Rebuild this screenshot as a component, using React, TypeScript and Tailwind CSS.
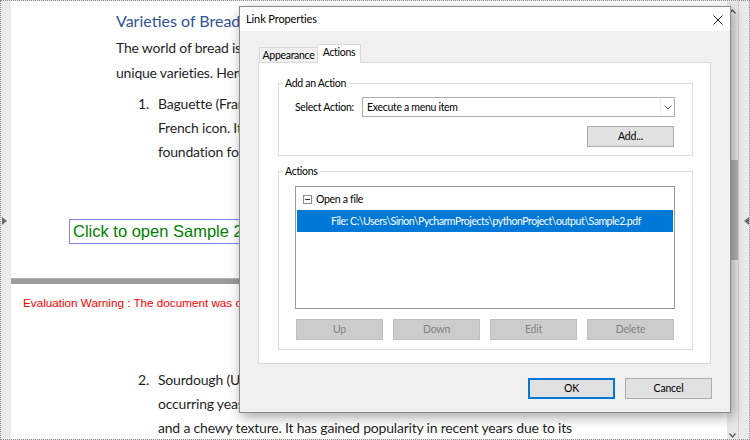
import clsx from 'clsx';

const docFont = "font-['Lato','Noto_Sans',sans-serif]";
const uiFont = "font-['Lato','Noto_Sans',sans-serif]";

function WinButton({
  label,
  disabled,
  primary,
}: {
  label: string;
  disabled?: boolean;
  primary?: boolean;
}) {
  return (
    <button
      type="button"
      className={clsx(
        'flex h-[21px] w-[87px] items-center justify-center text-[10.5px] leading-none tracking-[-0.2px]',
        disabled && 'border border-[#bfbfbf] bg-[#cccccc] text-[#838383]',
        !disabled && !primary && 'border border-[#adadad] bg-[#e1e1e1] text-black',
        primary && 'border-2 border-[#0078d7] bg-[#e1e1e1] text-black'
      )}
    >
      {label}
    </button>
  );
}

function GroupBox({ title, children }: { title: string; children: React.ReactNode }) {
  return (
    <fieldset className="m-0 min-w-0 border border-[#dcdcdc] p-0">
      <legend className="ml-[4px] px-[2px] leading-[16px]">{title}</legend>
      <div className="pl-[16px] pr-[17px] pt-[6px]">{children}</div>
    </fieldset>
  );
}

function LinkDialog() {
  return (
    <div
      className={clsx(
        'absolute left-[238px] top-[5px] flex h-[407px] w-[492px] flex-col border border-[#8c8c8c] bg-[#f0f0f0] text-[10.5px] tracking-[-0.3px] text-black shadow-[2px_4px_12px_rgba(0,0,0,0.35)]',
        uiFont
      )}
    >
      {/* title bar */}
      <div className="flex h-[24px] items-center justify-between bg-white pl-[6px] pr-[7px]">
        <span className="whitespace-nowrap text-[11px] leading-[14px] tracking-[-0.1px]">Link Properties</span>
        <svg width="10" height="10" viewBox="0 0 10 10" className="mt-[1px]">
          <path d="M0.5 0.5 L9.5 9.5 M9.5 0.5 L0.5 9.5" stroke="#1a1a1a" strokeWidth="1" />
        </svg>
      </div>

      <div className="flex flex-1 flex-col pl-[18px] pt-[13px]">
        {/* tabs */}
        <div className="flex h-[18px] items-end pl-[1px]">
          <div className="flex h-[15px] w-[58px] justify-center whitespace-nowrap border border-b-0 border-r-0 border-[#d9d9d9] bg-[#f0f0f0] leading-[14px]">
            Appearance
          </div>
          <div className="relative z-10 -mb-px flex h-[19px] w-[44px] justify-center whitespace-nowrap border border-b-0 border-[#d9d9d9] bg-white leading-[15px]">
            Actions
          </div>
        </div>

        <div className="flex h-[302px] w-[453px] flex-col border border-[#d9d9d9] bg-white pl-[19px] pt-[12px]">
          <div className="w-[415px]">
            <GroupBox title="Add an Action">
              <div className="flex h-[20px] items-center">
                <span className="w-[67px] whitespace-nowrap leading-[14px]">Select Action:</span>
                <div className="flex h-[20px] w-[313px] items-center border border-[#adadad] bg-white">
                  <span className="flex-1 whitespace-nowrap pl-[4px] leading-[14px]">Execute a menu item</span>
                  <div className="flex h-full w-[14px] items-center justify-center border-l border-[#ececec]">
                    <svg width="8" height="5" viewBox="0 0 8 5">
                      <path d="M0.5 0.5 L4 4 L7.5 0.5" fill="none" stroke="#606060" strokeWidth="1" />
                    </svg>
                  </div>
                </div>
              </div>
              <div className="mr-[1px] mt-[9px] flex justify-end pb-[8px]">
                <WinButton label="Add..." />
              </div>
            </GroupBox>

            <div className="mt-[7px]">
              <GroupBox title="Actions">
                <div className="mt-[1px] h-[123px] w-[380px] overflow-hidden border border-[#9a9a9a] bg-white p-px">
                  <div className="flex h-[22px] items-center pl-[6px]">
                    <svg width="9" height="9" viewBox="0 0 9 9">
                      <rect x="0.5" y="0.5" width="8" height="8" fill="white" stroke="#8c8c8c" />
                      <path d="M2 4.5 H7" stroke="#333" strokeWidth="1" />
                    </svg>
                    <span className="ml-[4px] leading-[14px]">Open a file</span>
                  </div>
                  <div className="flex h-[22px] items-center bg-[#0078d7] pl-[34px] text-white">
                    <span className="whitespace-nowrap leading-[14px] tracking-[-0.45px]">
                      File: C:\Users\Sirion\PycharmProjects\pythonProject\output\Sample2.pdf
                    </span>
                  </div>
                </div>
                <div className="ml-[1px] mt-[10px] flex gap-[10px] pb-[9px]">
                  <WinButton label="Up" disabled />
                  <WinButton label="Down" disabled />
                  <WinButton label="Edit" disabled />
                  <WinButton label="Delete" disabled />
                </div>
              </GroupBox>
            </div>
          </div>
        </div>

        <div className="mr-[18px] mt-[14px] flex justify-end gap-[10px]">
          <WinButton label="OK" primary />
          <WinButton label="Cancel" />
        </div>
      </div>
    </div>
  );
}

function Document() {
  return (
    <div className={clsx('flex w-[716px] flex-col bg-white text-[#1f1f1f]', docFont)}>
      {/* page 1 */}
      <div className="h-[277px] shrink-0 pt-[10px]">
        <div className="pl-[105px]">
          <div className="whitespace-nowrap text-[16px] leading-[20px] text-[#2f5496]">
            Varieties of Bread Around the World
          </div>
          <div className="mt-[4px] whitespace-nowrap text-[14px] leading-[25px] tracking-[-0.2px]">
            <div>The world of bread is incredibly diverse, with every culture offering its own</div>
            <div>unique varieties. Here are some popular types of bread from around the globe:</div>
          </div>
          <div className="mt-[7px] flex whitespace-nowrap pl-[22px] text-[14px] leading-[24px] tracking-[-0.2px]">
            <span className="w-[20px]">1.</span>
            <div>
              <div>Baguette (France): The baguette is a long, thin loaf with a crisp crust and is a</div>
              <div>French icon. It is made from wheat flour, water, yeast and salt, and forms the</div>
              <div>foundation for many classic sandwiches.</div>
            </div>
          </div>
        </div>
        <div className="ml-[58px] mt-[55px] flex h-[25px] w-[320px] items-center border border-[#8080ff] pl-[3px]">
          <span className="whitespace-nowrap font-['Liberation_Sans',Arial,sans-serif] text-[16.5px] leading-none text-[#008000]">
            Click to open Sample 2
          </span>
        </div>
      </div>

      <div className="h-[6px] shrink-0 border-t border-[#b5b5b5] bg-[#9c9c9c]" />

      {/* page 2 */}
      <div className="shrink-0 pl-[12px] pt-[11px]">
        <div className="whitespace-nowrap font-['Liberation_Sans',Arial,sans-serif] text-[11.7px] leading-[16px] text-[#ff0000]">
          Evaluation Warning : The document was created with Spire.PDF for Python.
        </div>
        <div className="ml-[115px] mt-[57px] flex whitespace-nowrap text-[14px] leading-[24px] tracking-[-0.2px]">
          <span className="w-[20px]">2.</span>
          <div>
            <div>Sourdough (United States): Sourdough bread is made using naturally</div>
            <div>occurring yeast and lactobacilli, which give it a tangy flavor</div>
            <div>and a chewy texture. It has gained popularity in recent years due to its</div>
          </div>
        </div>
      </div>
    </div>
  );
}

export default function App() {
  return (
    <div className="relative flex h-[440px] w-[750px] overflow-hidden border border-dotted border-[#8a8a8a] bg-[#ebebeb]">
      {/* left gutter */}
      <div className="flex w-[10px] shrink-0 items-center pl-[1px]">
        <svg width="5" height="8" viewBox="0 0 5 8" className="mt-[2px]">
          <path d="M0 0 L5 4 L0 8 Z" fill="#6b6b6b" />
        </svg>
      </div>

      <Document />

      {/* vertical scrollbar */}
      <div className="flex w-[12px] shrink-0 flex-col items-center border-r border-[#d2d2d2] bg-[#e8e8e8]">
        <svg width="7" height="5" viewBox="0 0 7 5" className="mt-[8px]">
          <path d="M0.5 4.5 L3.5 1 L6.5 4.5" fill="none" stroke="#555" strokeWidth="1.2" />
        </svg>
        <div className="ml-[2px] mt-[146px] h-[100px] w-[9px] self-start border-l-2 border-[#999999] bg-[#b3b3b3]" />
        <div className="flex-1" />
        <svg width="7" height="5" viewBox="0 0 7 5" className="mb-[1px]">
          <path d="M0.5 0.5 L3.5 4 L6.5 0.5" fill="none" stroke="#555" strokeWidth="1.2" />
        </svg>
      </div>

      {/* right gutter */}
      <div className="flex flex-1 items-center justify-end">
        <svg width="5" height="8" viewBox="0 0 5 8" className="mt-[2px]">
          <path d="M5 0 L0 4 L5 8 Z" fill="#6b6b6b" />
        </svg>
      </div>

      <LinkDialog />
    </div>
  );
}
